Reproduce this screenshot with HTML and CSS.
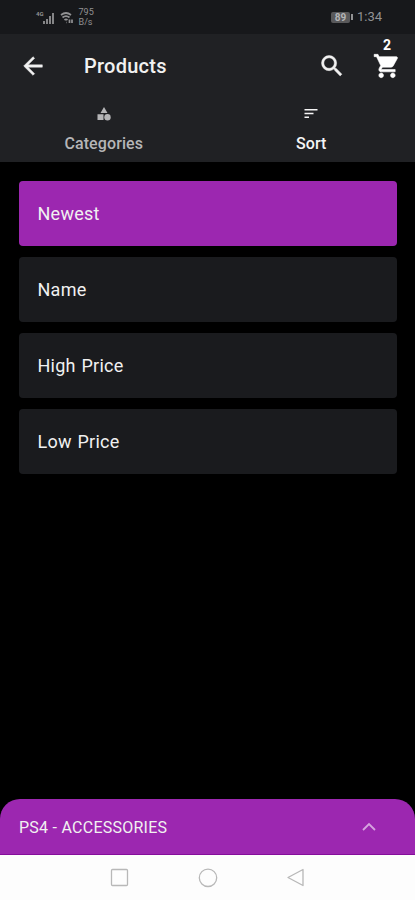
FILE: index.html
```html
<!DOCTYPE html>
<html lang="en">
<head>
<meta charset="utf-8">
<meta name="viewport" content="width=device-width, initial-scale=1">
<title>Products</title>
<link rel="stylesheet" href="styles.css">
</head>
<body>
<div class="app">
  <div class="status">
    <div class="status-left">
      <span class="network">4G</span>
      <svg class="signal" width="12" height="12" viewBox="0 0 12 12"><path d="M0 9h2v3H0zM3 7h2v5H3zM6 4h2v8H6zM9 1h2v11H9z"/></svg>
      <svg class="wifi" width="13" height="13" viewBox="0 0 13 13"><path d="M1 4q5-4 10 0M2.500 6.500q3.500-2.800 7 0M4.500 9q1.500-1.300 3 0"/><path d="M6 11.500h.5M9.500 8.500v3.500M12 12V8.500"/></svg>
      <span class="speed"><span>795</span><span>B/s</span></span>
    </div>
    <div class="status-right">
      <span class="battery">89</span>
      <span class="battery-tip"></span>
      <span class="clock">1:34</span>
    </div>
  </div>

  <header class="header">
    <div class="toolbar">
      <svg class="back" width="28" height="28" viewBox="0 0 24 24"><path d="M20 11H7.830l5.590-5.590L12 4l-8 8 8 8 1.410-1.410L7.830 13H20z"/></svg>
      <h1 class="title">Products</h1>
      <svg class="search" width="28" height="28" viewBox="0 0 24 24"><path d="M15.500 14h-.79l-.28-.27A6.470 6.470 0 0 0 16 9.500 6.500 6.500 0 1 0 9.500 16c1.610 0 3.090-.59 4.230-1.570l.27.28v.79l5 4.990L20.490 19zm-6 0a4.500 4.500 0 1 1 0-9 4.500 4.500 0 0 1 0 9z"/></svg>
      <div class="cart">
        <svg width="28" height="28" viewBox="0 0 24 24"><path d="M7 18c-1.100 0-1.990.9-1.990 2S5.900 22 7 22s2-.9 2-2-.9-2-2-2zM1 2v2h2l3.600 7.590-1.350 2.450C4.520 15.370 5.480 17 7 17h12v-2H7.420a.25.25 0 0 1-.25-.25l.03-.12.900-1.630h7.450c.75 0 1.410-.41 1.750-1.030l3.580-6.490A1 1 0 0 0 20 4H5.210l-.94-2zm16 16c-1.100 0-1.990.9-1.990 2s.89 2 1.990 2 2-.9 2-2-.9-2-2-2z"/></svg>
        <span class="count">2</span>
      </div>
    </div>
    <nav class="tabs">
      <div class="tab">
        <svg width="16" height="16" viewBox="0 0 16 16"><path d="M8 1l3.500 6h-7zM1.500 8.300h6V14h-6z"/><circle cx="11.500" cy="11.200" r="3.200"/></svg>
        <span>Categories</span>
      </div>
      <div class="tab active">
        <svg width="16" height="16" viewBox="0 0 16 16"><path d="M1.500 3h13v1.500h-13zM1.500 6.800h9v1.500h-9zM1.500 10.600H6v1.500H1.500z"/></svg>
        <span>Sort</span>
      </div>
    </nav>
  </header>

  <main class="options">
    <div class="option selected">Newest</div>
    <div class="option">Name</div>
    <div class="option">High Price</div>
    <div class="option">Low Price</div>
  </main>

  <div class="sheet">
    <span>PS4 - ACCESSORIES</span>
    <svg width="16" height="12" viewBox="0 0 16 12"><path d="M2 9l6-6 6 6"/></svg>
  </div>

  <div class="system-nav">
    <svg width="20" height="20" viewBox="0 0 20 20"><rect x="1.500" y="1.500" width="16" height="16" rx="1"/></svg>
    <svg width="20" height="20" viewBox="0 0 20 20"><circle cx="10" cy="9.800" r="8.700"/></svg>
    <svg width="20" height="20" viewBox="0 0 20 20"><path d="M17 1.500v16L2 9.500z"/></svg>
  </div>
</div>
</body>
</html>
```
FILE: styles.css
```css
* { box-sizing: border-box; }
body {
  margin: 0;
  background: #000;
  color: #f1f1f1;
  font-family: Roboto, sans-serif;
}
svg { display: block; flex: none; fill: currentColor; }
.app { height: 900px; display: flex; flex-direction: column; }

.status {
  height: 34px;
  display: flex;
  justify-content: space-between;
  padding: 0 33px 0 36px;
  background: #17181b;
  color: #929294;
}
.status-left, .status-right { display: flex; align-items: center; }
.network { align-self: flex-start; margin-top: 10px; font-size: 6px; line-height: 8px; font-weight: 700; }
.signal { margin: 1px 0 0 -1px; color: #858587; }
.wifi { margin-left: 5px; fill: none; stroke: currentColor; stroke-width: 1.7; }
.speed { display: flex; flex-direction: column; margin-left: 6px; font-size: 9px; line-height: 10px; }
.battery {
  width: 19px;
  height: 11px;
  border-radius: 2px;
  background: #59595b;
  color: #b4b4b6;
  font-size: 10px;
  line-height: 11px;
  font-weight: 700;
  text-align: center;
}
.battery-tip { width: 2px; height: 6px; margin-left: 1px; background: #929294; }
.clock { margin-left: 4px; font-size: 13px; line-height: 34px; }

.header { height: 128px; background: #202124; }
.toolbar { height: 64px; display: flex; align-items: center; padding: 0 14px 0 19px; }
.back, .search { stroke: currentColor; stroke-width: .4; }
.title { flex: 1; margin: 0 0 0 37px; font-size: 20px; line-height: 24px; font-weight: 500; letter-spacing: .25px; }
.search { margin-right: 27px; }
.cart { position: relative; color: #fff; }
.cart svg { stroke: currentColor; stroke-width: .5; }
.count { position: absolute; top: -14px; left: 10px; font-size: 14px; line-height: 14px; font-weight: 700; }
.tabs { height: 64px; display: grid; grid-template-columns: 1fr 1fr; }
.tab {
  display: flex;
  flex-direction: column;
  align-items: center;
  padding-top: 8px;
  color: #b5b5b7;
  font-size: 16px;
  line-height: 20px;
  font-weight: 500;
  letter-spacing: .1px;
}
.tab span { margin-top: 12px; }
.tab.active { color: #f5f5f5; }

.options { flex: 1; display: flex; flex-direction: column; gap: 11px; padding: 19px 18px 0 19px; }
.option {
  height: 65px;
  padding-left: 18.5px;
  border-radius: 4px;
  background: #1a1b1e;
  font-size: 18px;
  line-height: 65px;
  letter-spacing: .25px;
  word-spacing: 1px;
}
.option.selected { background: #9c27b0; }

.sheet {
  height: 56px;
  display: flex;
  align-items: center;
  justify-content: space-between;
  padding: 1px 38px 0 19px;
  border-bottom: 1px solid #850d9b;
  border-radius: 20px 20px 0 0;
  background: #9c27b0;
  font-size: 16px;
  letter-spacing: .25px;
}
.sheet svg { fill: none; stroke: #d6a4df; stroke-width: 1.8; }

.system-nav { height: 45px; display: flex; justify-content: center; gap: 68px; padding-top: 13px; background: #fdfdfd; }
.system-nav svg { fill: none; stroke: #b8b8b8; stroke-width: 1.3; stroke-linejoin: round; }
```
